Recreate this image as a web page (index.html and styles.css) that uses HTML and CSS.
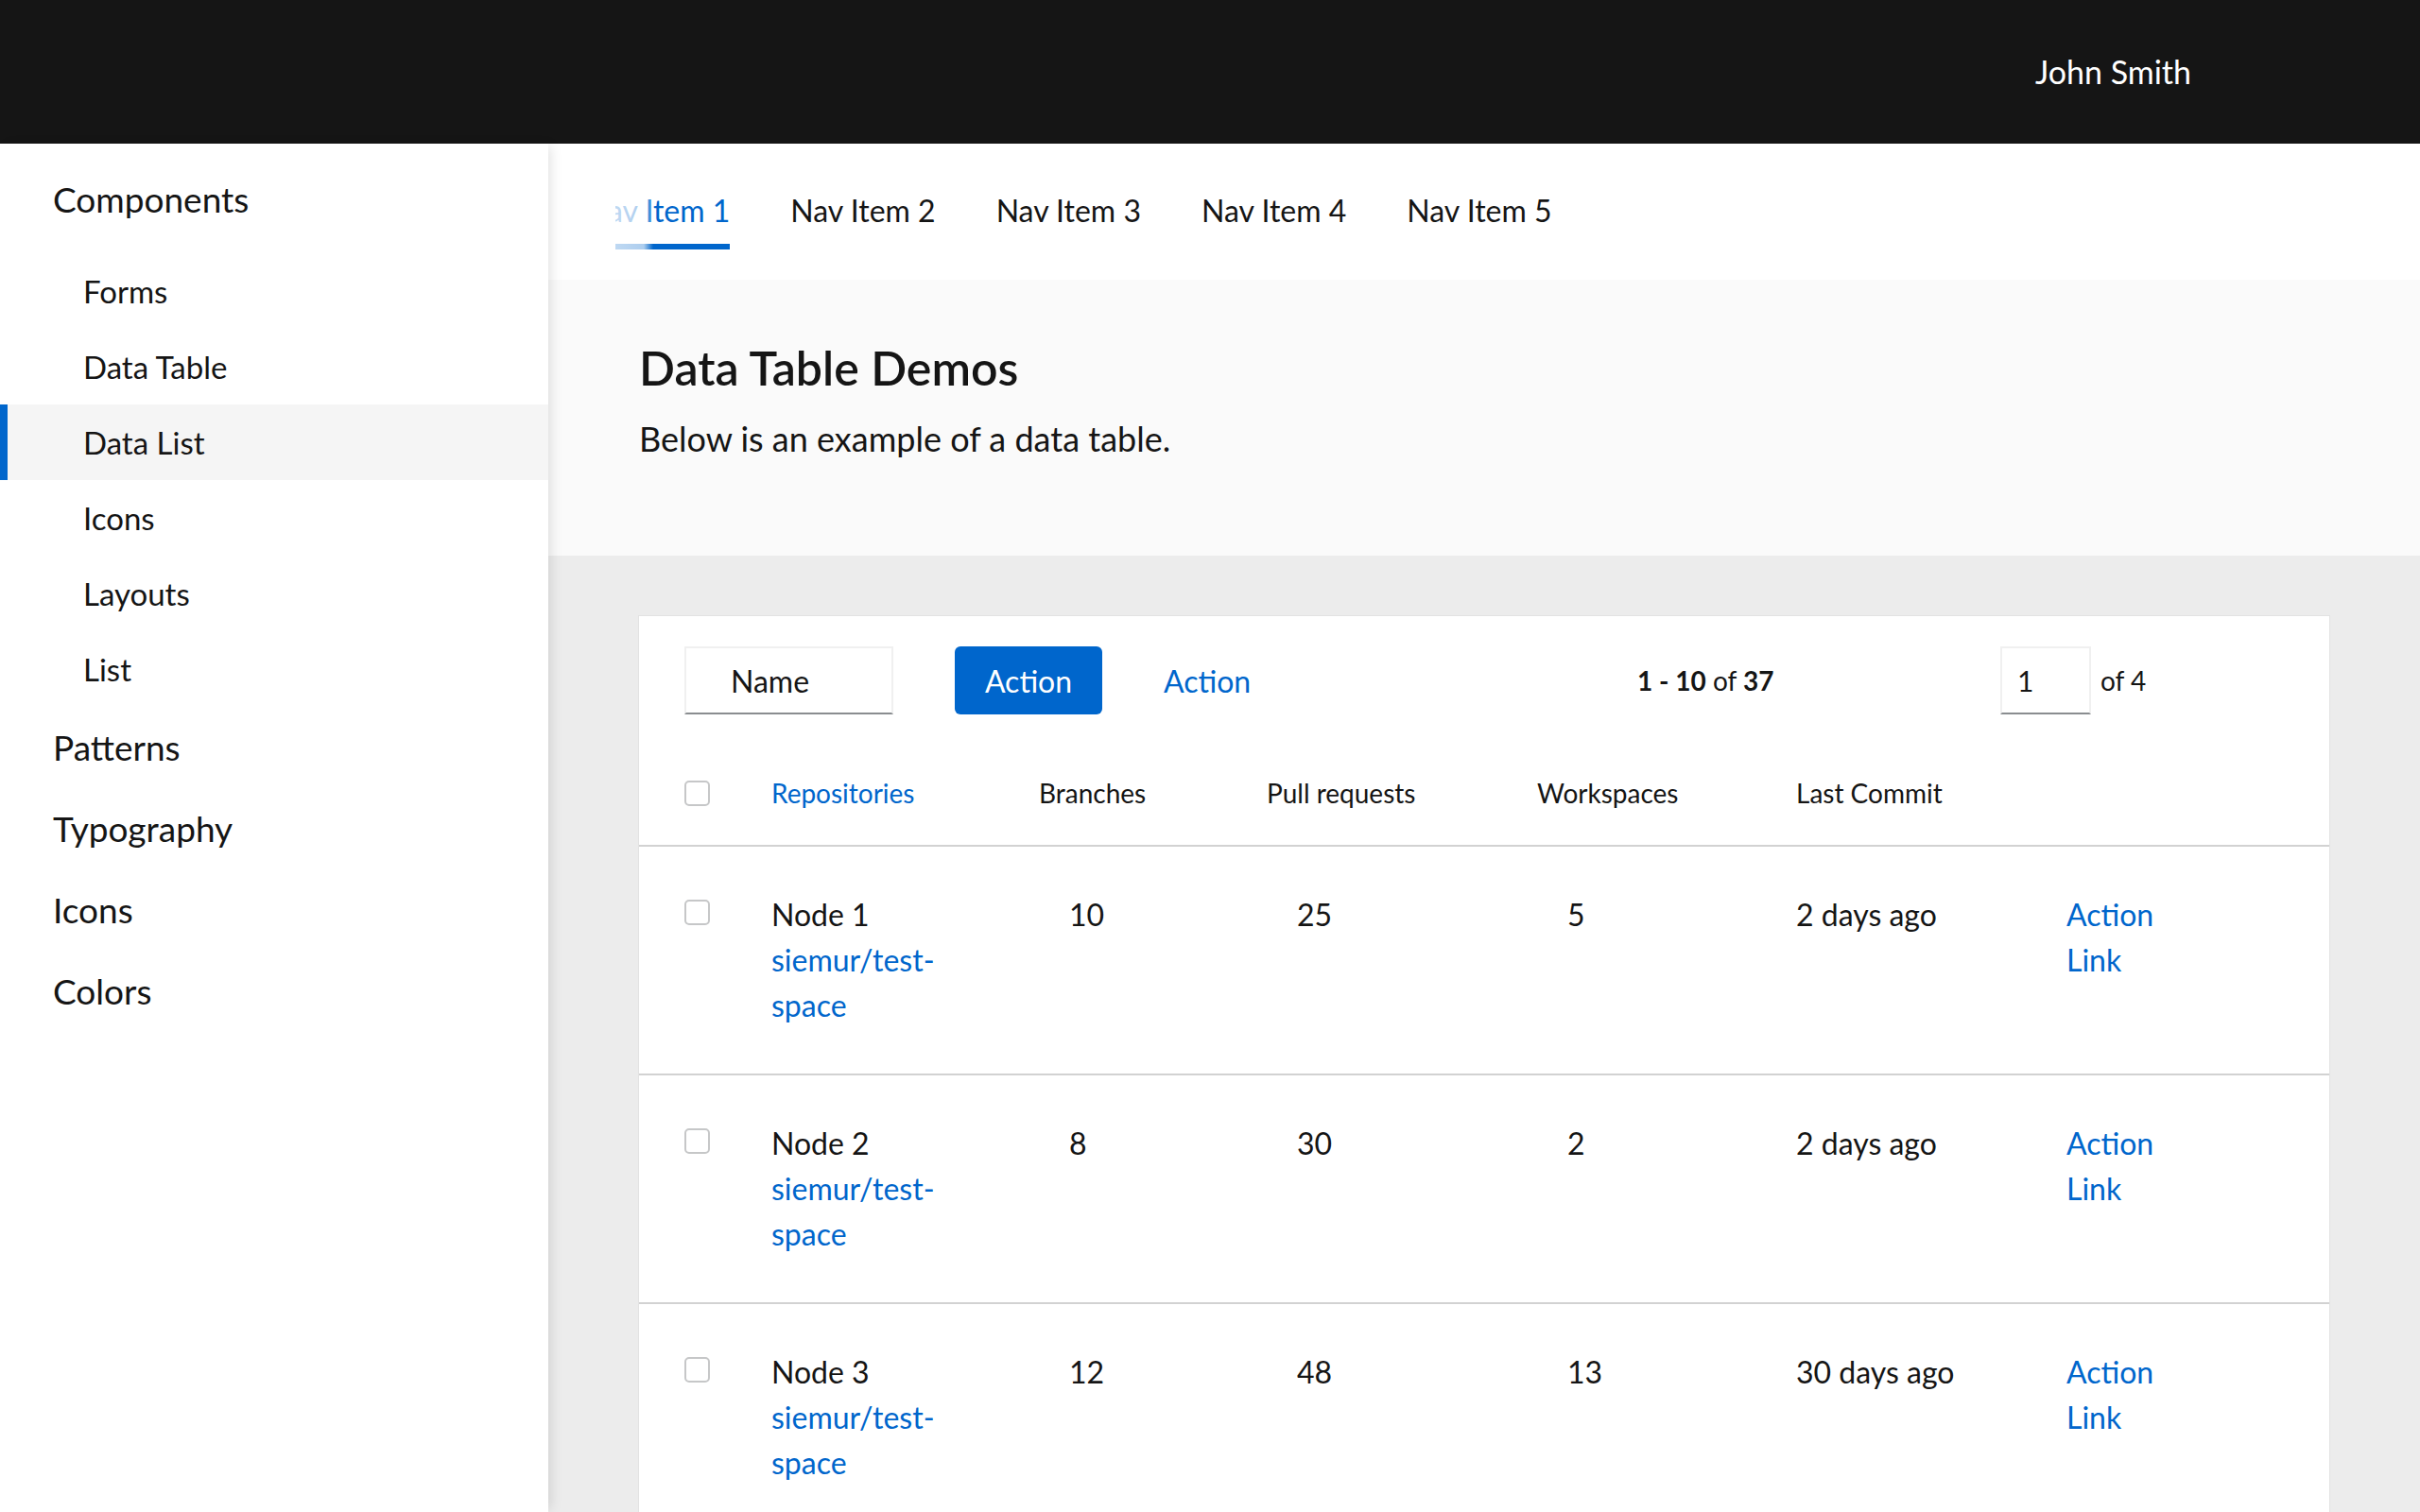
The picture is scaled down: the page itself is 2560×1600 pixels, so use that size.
FILE: index.html
```html
<!DOCTYPE html>
<html lang="en">
<head>
<meta charset="utf-8">
<title>Data Table Demos</title>
<link rel="stylesheet" href="styles.css">
</head>
<body>
<header class="masthead">
  <span class="user">John Smith</span>
</header>
<div class="page">
  <aside class="sidebar">
    <nav>
      <ul class="nav-list">
        <li class="nav-group">
          <div class="nav-group-title">Components</div>
          <ul class="sub-list">
            <li><a class="nav-sub" href="#">Forms</a></li>
            <li><a class="nav-sub" href="#">Data Table</a></li>
            <li><a class="nav-sub active" href="#">Data List</a></li>
            <li><a class="nav-sub" href="#">Icons</a></li>
            <li><a class="nav-sub" href="#">Layouts</a></li>
            <li><a class="nav-sub" href="#">List</a></li>
          </ul>
        </li>
        <li><a class="nav-top" href="#">Patterns</a></li>
        <li><a class="nav-top" href="#">Typography</a></li>
        <li><a class="nav-top" href="#">Icons</a></li>
        <li><a class="nav-top" href="#">Colors</a></li>
      </ul>
    </nav>
  </aside>
  <main class="main">
    <div class="tabs">
      <div class="tabs-clip">
        <ul class="tabs-list">
          <li><a class="tab active" href="#">Nav Item 1</a></li>
          <li><a class="tab" href="#">Nav Item 2</a></li>
          <li><a class="tab" href="#">Nav Item 3</a></li>
          <li><a class="tab" href="#">Nav Item 4</a></li>
          <li><a class="tab" href="#">Nav Item 5</a></li>
        </ul>
        <span class="tabs-fade"></span>
      </div>
    </div>
    <section class="intro">
      <h1 class="title">Data Table Demos</h1>
      <p class="lead">Below is an example of a data table.</p>
    </section>
    <section class="content">
      <div class="card">
        <div class="toolbar">
          <div class="search">Name</div>
          <button class="btn-primary" type="button">Action</button>
          <a class="btn-link" href="#">Action</a>
          <div class="count"><b>1 - 10</b> of <b>37</b></div>
          <div class="page-input">1</div>
          <div class="page-of">of 4</div>
        </div>
        <div class="tr thead">
          <div><input class="check" type="checkbox" aria-label="Select all"></div>
          <div class="sorted">Repositories</div>
          <div>Branches</div>
          <div>Pull requests</div>
          <div>Workspaces</div>
          <div>Last Commit</div>
          <div></div>
        </div>
        <div class="tr trow">
          <div><input class="check" type="checkbox" aria-label="Select row 1"></div>
          <div class="repo">Node 1<a href="#">siemur/test-space</a></div>
          <div class="num">10</div>
          <div class="num">25</div>
          <div class="num">5</div>
          <div>2 days ago</div>
          <div class="actions"><a href="#">Action Link</a></div>
        </div>
        <div class="tr trow">
          <div><input class="check" type="checkbox" aria-label="Select row 2"></div>
          <div class="repo">Node 2<a href="#">siemur/test-space</a></div>
          <div class="num">8</div>
          <div class="num">30</div>
          <div class="num">2</div>
          <div>2 days ago</div>
          <div class="actions"><a href="#">Action Link</a></div>
        </div>
        <div class="tr trow">
          <div><input class="check" type="checkbox" aria-label="Select row 3"></div>
          <div class="repo">Node 3<a href="#">siemur/test-space</a></div>
          <div class="num">12</div>
          <div class="num">48</div>
          <div class="num">13</div>
          <div>30 days ago</div>
          <div class="actions"><a href="#">Action Link</a></div>
        </div>
      </div>
    </section>
  </main>
</div>
</body>
</html>
```

FILE: styles.css
```css
html, body {
  margin: 0;
  height: 100%;
  overflow: hidden;
}
body {
  font-family: Lato, "Open Sans", "Liberation Sans", sans-serif;
  color: #151515;
  background: #fff;
}
ul {
  list-style: none;
  margin: 0;
  padding: 0;
}
a {
  text-decoration: none;
}

/* masthead */
.masthead {
  height: 152px;
  background: #151515;
  display: flex;
  align-items: center;
  justify-content: flex-end;
  padding-right: 242px;
  box-sizing: border-box;
}
.user {
  color: #fff;
  font-size: 34px;
  line-height: 48px;
}

/* layout */
.page {
  display: flex;
  height: calc(100% - 152px);
}
.sidebar {
  width: 580px;
  flex: none;
  background: #fff;
  position: relative;
  z-index: 1;
  box-shadow: 5px 0 12px -3px rgba(0, 0, 0, 0.13);
  padding-top: 16px;
  box-sizing: border-box;
}
.nav-group-title,
.nav-top {
  display: block;
  font-size: 37px;
  line-height: 54px;
  padding: 16px 56px;
  color: #151515;
}
.sub-list {
  margin-top: 14px;
}
.nav-sub {
  display: block;
  font-size: 33px;
  line-height: 48px;
  padding: 16px 88px;
  color: #151515;
}
.nav-sub.active {
  background: #f5f5f5;
  box-shadow: inset 8px 0 0 #06c;
}

/* main */
.main {
  flex: 1;
  min-width: 0;
  display: flex;
  flex-direction: column;
}
.tabs {
  height: 144px;
  flex: none;
  background: #fff;
  padding-left: 71px;
  box-sizing: border-box;
}
.tabs-clip {
  position: relative;
  overflow: hidden;
}
.tabs-list {
  display: flex;
  gap: 64px;
  margin-left: -32px;
}
.tab {
  display: block;
  white-space: nowrap;
  font-size: 32px;
  line-height: 48px;
  padding: 47px 0 11px;
  border-bottom: 6px solid transparent;
  color: #151515;
}
.tab.active {
  color: #06c;
  border-bottom-color: #06c;
}
.tabs-fade {
  position: absolute;
  left: 0;
  top: 0;
  bottom: 0;
  width: 40px;
  background: linear-gradient(to right, rgba(255,255,255,0.75), rgba(255,255,255,0.68) 75%, rgba(255,255,255,0));
}

.intro {
  flex: none;
  background: #fafafa;
  padding: 62px 96px 99px;
}
.title {
  margin: 0;
  font-size: 50px;
  line-height: 62px;
  font-weight: 600;
}
.lead {
  margin: 20px 0 0;
  font-size: 36px;
  line-height: 49px;
}

.content {
  flex: 1;
  background: #ececec;
  padding: 64px 96px 0;
}
.card {
  background: #fff;
  box-shadow: 0 0 0 1px #e2e2e2;
}

/* toolbar */
.toolbar {
  display: flex;
  align-items: center;
  padding: 32px 48px 0;
}
.search {
  width: 221px;
  height: 72px;
  box-sizing: border-box;
  border: 2px solid #f0f0f0;
  border-bottom-color: #8a8d90;
  padding-left: 47px;
  display: flex;
  align-items: center;
  font-size: 32px;
}
.btn-primary {
  margin-left: 65px;
  width: 156px;
  height: 72px;
  border: 0;
  border-radius: 6px;
  background: #06c;
  color: #fff;
  font-family: inherit;
  font-size: 32px;
  padding: 0;
}
.btn-link {
  margin-left: 65px;
  width: 92px;
  white-space: nowrap;
  color: #06c;
  font-size: 32px;
}
.count {
  margin-left: 409px;
  width: 137px;
  white-space: nowrap;
  font-size: 28px;
  line-height: 42px;
}
.count b {
  font-weight: 700;
}
.page-input {
  margin-left: 247px;
  width: 96px;
  height: 72px;
  box-sizing: border-box;
  border: 2px solid #f0f0f0;
  border-bottom-color: #8a8d90;
  padding-left: 16px;
  display: flex;
  align-items: center;
  font-size: 30px;
}
.page-of {
  margin-left: 10px;
  font-size: 28px;
  line-height: 42px;
}

/* table */
.tr {
  display: grid;
  grid-template-columns: 92px 283px 241px 286px 274px 286px 1fr;
  padding: 0 48px;
}
.thead {
  padding-top: 62px;
  padding-bottom: 34px;
  align-items: center;
  font-size: 28px;
  line-height: 42px;
}
.thead .sorted {
  color: #06c;
}
.trow {
  border-top: 2px solid #d2d2d2;
  padding-top: 48px;
  padding-bottom: 48px;
  align-items: start;
  font-size: 32px;
  line-height: 48px;
}
.num {
  padding-left: 32px;
}
.repo a {
  display: block;
  max-width: 220px;
  color: #06c;
}
.actions a {
  display: block;
  max-width: 110px;
  color: #06c;
}
.check {
  appearance: none;
  -webkit-appearance: none;
  display: block;
  margin: 0;
  width: 27px;
  height: 27px;
  box-sizing: border-box;
  border: 2px solid #c6c7c8;
  border-radius: 5px;
  background: #fff;
}
.trow .check {
  margin-top: 8px;
}
```
